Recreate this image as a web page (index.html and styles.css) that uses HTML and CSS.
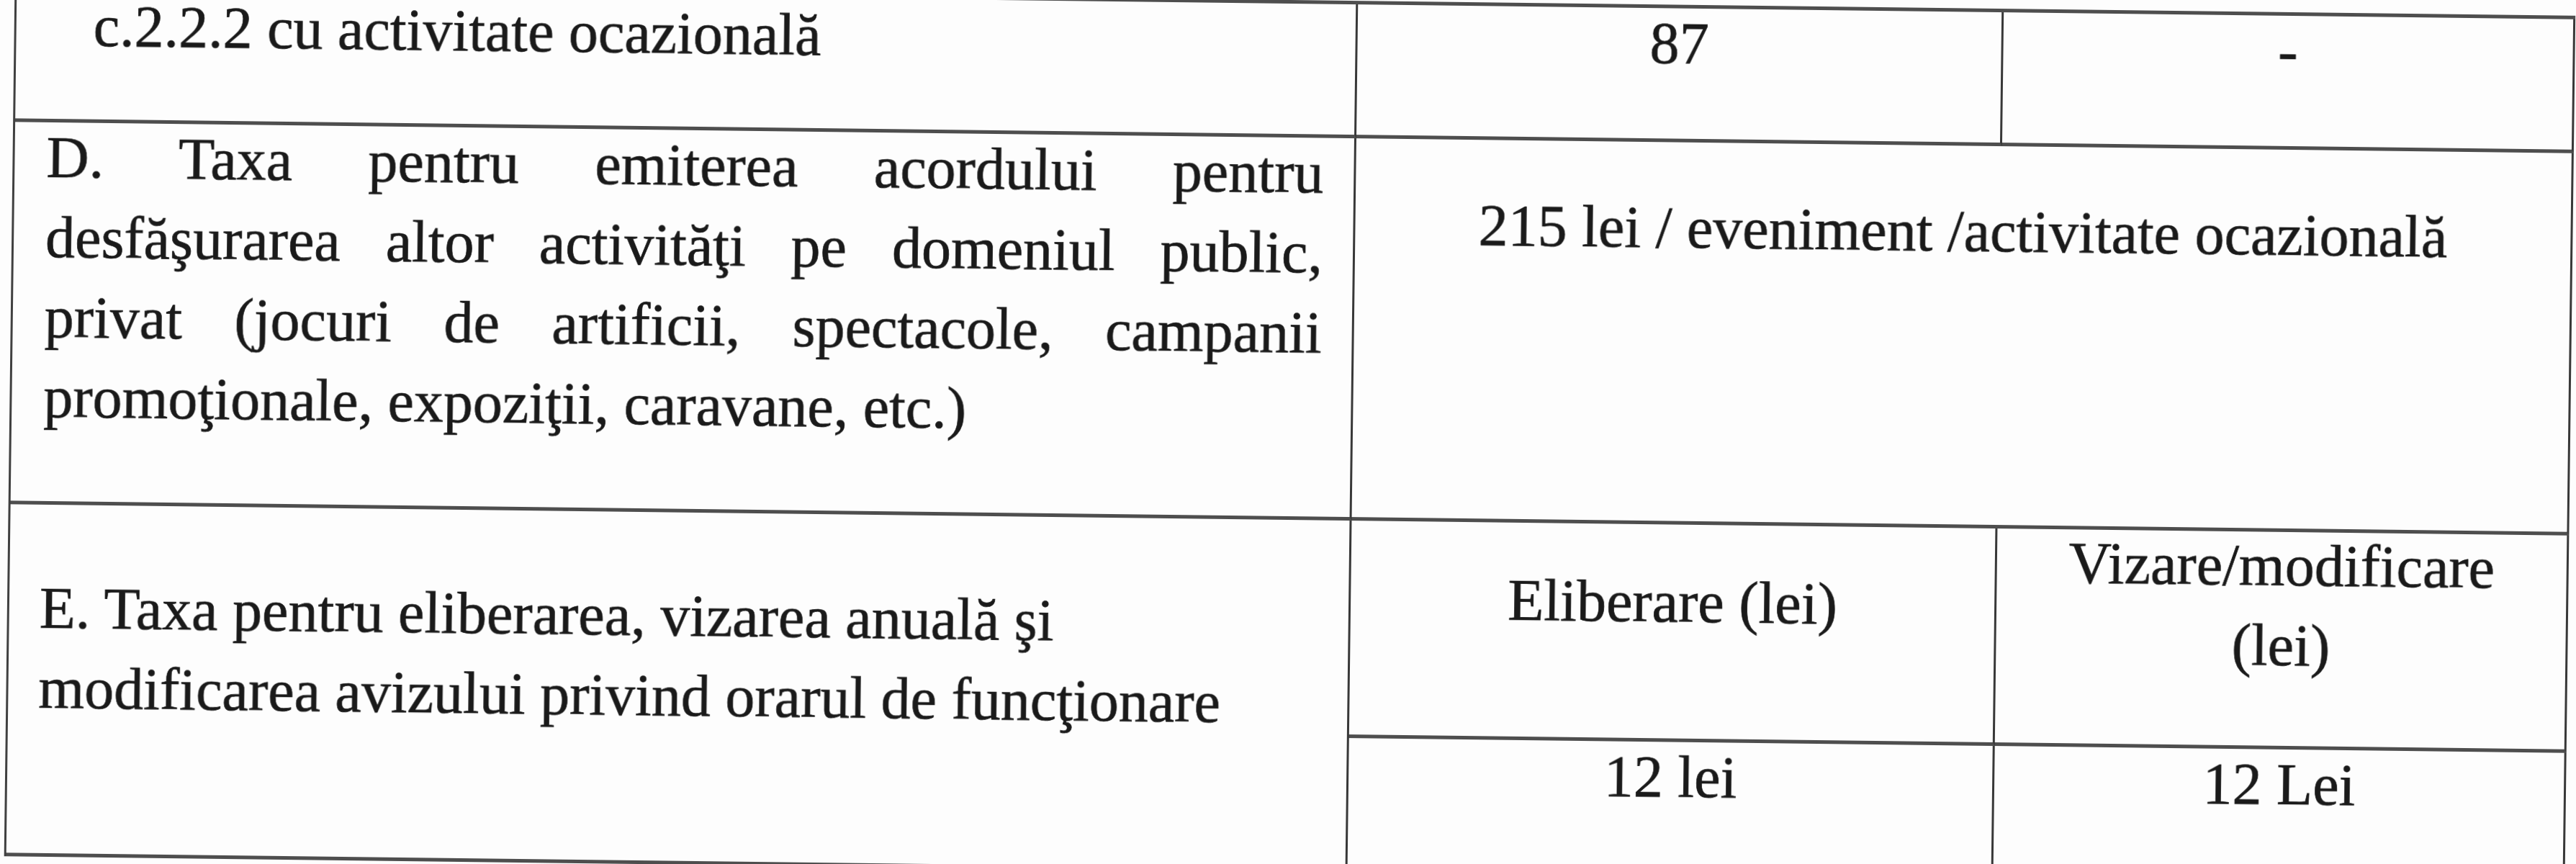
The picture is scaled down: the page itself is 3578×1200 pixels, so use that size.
FILE: index.html
```html
<!DOCTYPE html>
<html lang="ro">
<head>
<meta charset="utf-8">
<title>Taxe</title>
<link rel="stylesheet" href="styles.css">
</head>
<body>
<div class="sheet">
  <div class="table">
    <div class="cell first"><p class="indent">c.2.2.2 cu activitate ocazională</p></div>
    <div class="cell center"><p>87</p></div>
    <div class="cell center"><p>-</p></div>

    <div class="cell dcell">
      <p class="just">
        <span class="jl">D. Taxa pentru emiterea acordului pentru</span>
        <span class="jl">desfăşurarea altor activităţi pe domeniul public,</span>
        <span class="jl">privat (jocuri de artificii, spectacole, campanii</span>
        <span class="ll">promoţionale, expoziţii, caravane, etc.)</span>
      </p>
    </div>
    <div class="cell center span2"><p class="dval">215 lei / eveniment /activitate ocazională</p></div>

    <div class="cell ecell"><p class="etext">E. Taxa pentru eliberarea, vizarea anuală şi<br>modificarea avizului privind orarul de funcţionare</p></div>
    <div class="cell center"><p class="elib">Eliberare (lei)</p></div>
    <div class="cell center"><p class="viz">Vizare/modificare<br>(lei)</p></div>
    <div class="cell center"><p>12 lei</p></div>
    <div class="cell center"><p>12 Lei</p></div>
  </div>
</div>
</body>
</html>
```

FILE: styles.css
```css
html, body {
  margin: 0;
  padding: 0;
  background: #fdfdfd;
  width: 3578px;
  height: 1200px;
  overflow: hidden;
}

.sheet {
  width: 3578px;
  height: 1200px;
  overflow: hidden;
  font-family: "Liberation Serif", "Times New Roman", serif;
  font-size: 82px;
  line-height: 111px;
  color: #1a1a1a;
  -webkit-text-stroke: 0.7px #1a1a1a;
}

.table {
  display: grid;
  grid-template-columns: 1863px 897px 794px;
  grid-template-rows: 186px 531px 302px 187px;
  width: max-content;
  margin-left: 13px;
  border-top: 5px solid #4e4e4e;
  border-left: 3px solid #404040;
  transform: rotate(0.7deg);
  transform-origin: 1776px 600px;
  filter: blur(0.5px);
}

.cell {
  box-sizing: border-box;
  border-right: 3px solid #383838;
  border-bottom: 5px solid #4e4e4e;
  padding: 0 20px;
  overflow: visible;
}

.cell p {
  margin: -7px 0 0;
  white-space: nowrap;
}

.center {
  text-align: center;
}

.span2 {
  grid-column: span 2;
}

.first {
  padding-left: 107px;
}

.first p {
  margin-top: -4px;
}

.dcell {
  padding: 0 42px 0 44px;
}

.just .jl {
  display: block;
  text-align: justify;
  text-align-last: justify;
  white-space: normal;
}

.just .ll {
  display: block;
  text-align: left;
}

.dval {
  padding-top: 70px;
}

.ecell {
  grid-row: span 2;
  padding-left: 42px;
}

.cell .etext {
  margin-top: 88px;
}

.cell .elib {
  margin-top: 52px;
}

.cell .viz {
  margin-top: -9px;
}
```
